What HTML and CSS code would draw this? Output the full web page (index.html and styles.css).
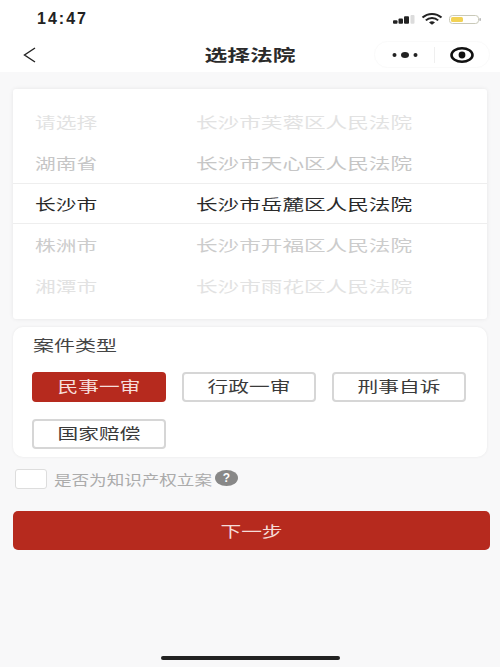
FILE: index.html
```html
<!DOCTYPE html>
<html lang="zh">
<head>
<meta charset="utf-8">
<title>选择法院</title>
<link rel="stylesheet" href="styles.css">
</head>
<body>
<header class="top">
  <div class="status">
    <span class="time">14:47</span>
    <svg class="status-icons" width="88" height="14" viewBox="0 0 88 14">
      <rect x="0" y="8.3" width="4.5" height="3.4" rx="1" fill="#222"/>
      <rect x="5.5" y="6.5" width="4.5" height="5.2" rx="1" fill="#222"/>
      <rect x="11" y="4.3" width="5" height="7.4" rx="1" fill="#222"/>
      <rect x="17.5" y="3" width="4" height="8.7" rx="1" fill="#dcdcdc"/>
      <path d="M29.5 5.6a14 14 0 0 1 19 0M32.8 8.4a9 9 0 0 1 12.4 0" fill="none" stroke="#222" stroke-width="2"/>
      <path d="M36 10.6a4.4 4.4 0 0 1 6 0L39 12.8z" fill="#222"/>
      <rect x="56.5" y="3.5" width="29" height="8" rx="3" fill="#fff" stroke="#c9c9b8"/>
      <rect x="58" y="5" width="12" height="5" rx="1.5" fill="#f2d255"/>
      <rect x="86.4" y="6" width="1.4" height="3" rx=".7" fill="#aaa"/>
    </svg>
  </div>
  <nav class="nav">
    <svg class="back" width="13" height="16" viewBox="0 0 13 16"><path d="M12 1 1.5 8l10.5 7" fill="none" stroke="#222" stroke-width="1.4"/></svg>
    <h1 class="title"><span class="wide-title">选择法院</span></h1>
    <div class="capsule">
      <svg width="26" height="8" viewBox="0 0 26 8"><circle cx="2.5" cy="4" r="2" fill="#222"/><ellipse cx="13" cy="4" rx="4" ry="3" fill="#222"/><circle cx="23.5" cy="4" r="2" fill="#222"/></svg>
      <span class="capsule-line"></span>
      <svg width="24" height="16" viewBox="0 0 24 16"><ellipse cx="12" cy="8" rx="10.5" ry="6.7" fill="none" stroke="#111" stroke-width="2.6"/><circle cx="12" cy="8" r="3.4" fill="#111"/></svg>
    </div>
  </nav>
</header>

<main class="page">
  <section class="picker">
    <div class="row fade-3"><span class="wide">请选择</span><span class="wide">长沙市芙蓉区人民法院</span></div>
    <div class="row fade-2"><span class="wide">湖南省</span><span class="wide">长沙市天心区人民法院</span></div>
    <div class="row current"><span class="wide">长沙市</span><span class="wide">长沙市岳麓区人民法院</span></div>
    <div class="row fade-2b"><span class="wide">株洲市</span><span class="wide">长沙市开福区人民法院</span></div>
    <div class="row fade-3"><span class="wide">湘潭市</span><span class="wide">长沙市雨花区人民法院</span></div>
  </section>

  <section class="types">
    <h2 class="types-title"><span class="wide">案件类型</span></h2>
    <div class="type-grid">
      <button class="type active"><span class="wide-center">民事一审</span></button>
      <button class="type"><span class="wide-center">行政一审</span></button>
      <button class="type"><span class="wide-center">刑事自诉</span></button>
      <button class="type"><span class="wide-center">国家赔偿</span></button>
    </div>
  </section>

  <div class="ip">
    <span class="check"></span>
    <span class="ip-label"><span class="wide-small">是否为知识产权立案</span></span>
    <span class="help">?</span>
  </div>

  <button class="next"><span class="wide-center">下一步</span></button>
</main>
<div class="home"></div>
</body>
</html>
```
FILE: styles.css
```css
* { box-sizing: border-box; }
body {
  margin: 0;
  height: 667px;
  overflow: hidden;
  background: #f8f8f9;
  font-family: "Noto Sans CJK SC", "Liberation Sans", sans-serif;
  position: relative;
}
.top { background: #fff; height: 72px; }
.status {
  height: 37px;
  padding: 0 19px 0 37px;
  display: flex;
  align-items: center;
  justify-content: space-between;
}
.time {
  font-family: "Liberation Sans", sans-serif;
  font-size: 16px;
  font-weight: 700;
  letter-spacing: 2px;
  color: #222;
}
.nav {
  height: 35px;
  display: grid;
  grid-template-columns: 1fr auto 1fr;
  align-items: center;
  padding: 0 10px;
}
.back { justify-self: start; margin-left: 13px; }
.title { margin: 0; padding-bottom: 2px; font-size: 16px; font-weight: 700; color: #2a2a2a; line-height: 24px; }
.wide-title { display: inline-block; transform: scaleX(1.42); }
.capsule {
  justify-self: end;
  width: 116px;
  height: 27px;
  border: 1px solid #fafafa;
  border-radius: 14px;
  display: flex;
  align-items: center;
  justify-content: space-between;
  padding: 0 15px 0 17px;
}
.capsule-line { width: 1px; height: 16px; background: #efefef; }
.page { padding: 17px 13px 0; }
.picker {
  background: #fff;
  height: 230px;
  padding-top: 12px;
  border-radius: 3px;
  box-shadow: 0 0 4px rgba(0,0,0,.08);
}
.row {
  height: 41px;
  padding-left: 22px;
  display: grid;
  grid-template-columns: 161px 1fr;
  align-items: center;
  justify-items: start;
  font-size: 15px;
  line-height: 20px;
  color: #222;
}
.wide { display: inline-block; transform: scaleX(1.38); transform-origin: left center; white-space: nowrap; }
.row .wide:last-child { transform: scaleX(1.44); }
.current { border-top: 1px solid #eee; border-bottom: 1px solid #eee; }
.fade-3 { color: #e2e2e2; }
.fade-2 { color: #c6c6c6; }
.fade-2b { color: #cccccc; }
.current .wide { color: #2a2a2a; }
.types {
  margin-top: 8px;
  height: 130px;
  background: #fff;
  border-radius: 10px;
  box-shadow: 0 0 3px rgba(0,0,0,.07);
  padding: 8px 19px 0;
}
.types-title { margin: 0 0 17px 1px; font-size: 15px; font-weight: 400; color: #444; line-height: 20px; }
.types-title .wide { transform: scaleX(1.4); }
.type-grid {
  display: grid;
  grid-template-columns: repeat(3, 134px);
  column-gap: 16px;
  row-gap: 17px;
}
.type {
  height: 30px;
  padding: 0 0 2px;
  background: #fff;
  border: 2px solid #d6d6d6;
  border-radius: 4px;
  font: 400 15px/20px "Noto Sans CJK SC", sans-serif;
  color: #3a3a3a;
}
.type.active { background: #b62a1e; border-color: #b62a1e; color: #f6dedb; }
.wide-center { display: inline-block; transform: scaleX(1.38); }
.ip {
  display: flex;
  align-items: center;
  height: 20px;
  margin: 12px 0 0 2px;
}
.check {
  width: 32px;
  height: 20px;
  background: #fff;
  border: 1px solid #ddd;
  border-radius: 3px;
}
.ip-label {
  margin-left: 7px;
  width: 161px;
  font-size: 13.5px;
  line-height: 20px;
  color: #ababab;
}
.wide-small { display: inline-block; transform: scaleX(1.3); transform-origin: left center; white-space: nowrap; }
.help {
  width: 23px;
  height: 16px;
  margin-top: -2px;
  border-radius: 50%;
  background: #888;
  color: #fff;
  font: 700 12px/16px "Liberation Sans", sans-serif;
  text-align: center;
}
.next {
  display: block;
  width: 477px;
  height: 39px;
  margin-top: 22px;
  padding: 0;
  border: 0;
  border-radius: 5px;
  background: #b62a1e;
  color: #f5dcd8;
  font: 400 15px/20px "Noto Sans CJK SC", sans-serif;
}
.home {
  position: absolute;
  left: 161px;
  top: 656px;
  width: 179px;
  height: 4px;
  border-radius: 2px;
  background: #222;
}
```
